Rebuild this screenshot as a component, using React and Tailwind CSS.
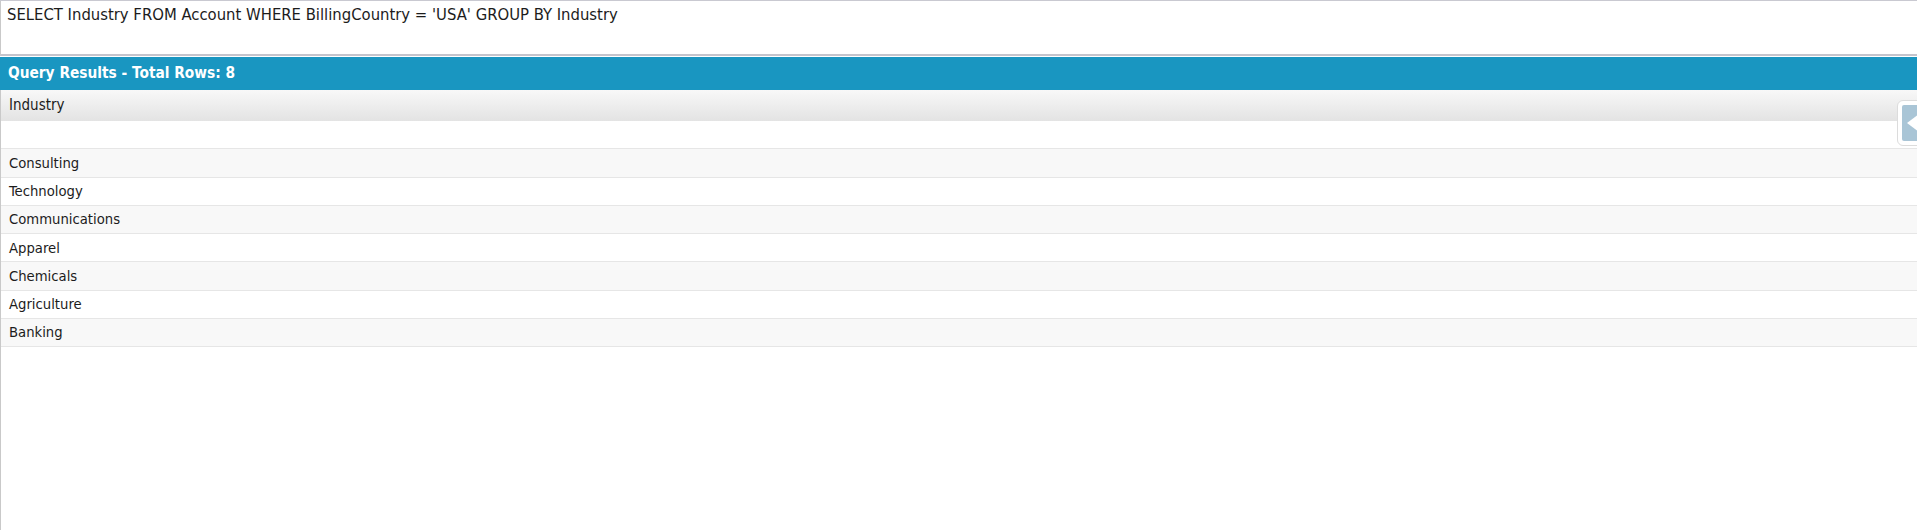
import React from "react";

const rows = ["", "Consulting", "Technology", "Communications", "Apparel", "Chemicals", "Agriculture", "Banking"];

export default function App() {
  const font = { fontFamily: '"DejaVu Sans Condensed", "DejaVu Sans", sans-serif' };
  return (
    <div className="relative w-[1917px] h-[530px] bg-white overflow-hidden text-[#1c1c1c]" style={font}>
      <div className="h-px bg-[#c9c9d1]" />
      <div className="h-[55px] border-l border-[#c9c9c9] border-b-2 border-b-[#c4c4cc] px-[6px] pt-[4px] text-[16.5px] leading-[20px]">
        SELECT Industry FROM Account WHERE BillingCountry = 'USA' GROUP BY Industry
      </div>
      <div className="h-px bg-white" />
      <div className="h-[33px] bg-[#1996c1] flex items-center px-[8px] text-white font-bold text-[15.3px]">
        Query Results - Total Rows: 8
      </div>
      <div className="border-l border-[#c9c9c9] h-[440px]">
        <div className="h-[31px] flex items-center px-[8px] text-[15px] bg-gradient-to-b from-[#f8f8f8] to-[#e3e3e3]">
          Industry
        </div>
        {rows.map((r, i) => (
          <div
            key={i}
            className={`h-[28.25px] flex items-center px-[8px] text-[14.7px] border-b border-[#e6e6e6] ${i % 2 === 1 ? "bg-[#f8f8f8]" : "bg-white"}`}
          >
            {r}
          </div>
        ))}
      </div>
      <div className="absolute left-[1897px] top-[100px] w-[40px] h-[46px] rounded-[6px] border border-[#dcdcdc] bg-white p-[4px]">
        <div className="w-full h-full bg-[#a9c5d6] rounded-[2px] flex items-center pl-[5px]">
          <svg width="12" height="18" viewBox="0 0 12 18">
            <path d="M0 9 L12 0 L12 18 Z" fill="#ffffff" />
          </svg>
        </div>
      </div>
    </div>
  );
}
